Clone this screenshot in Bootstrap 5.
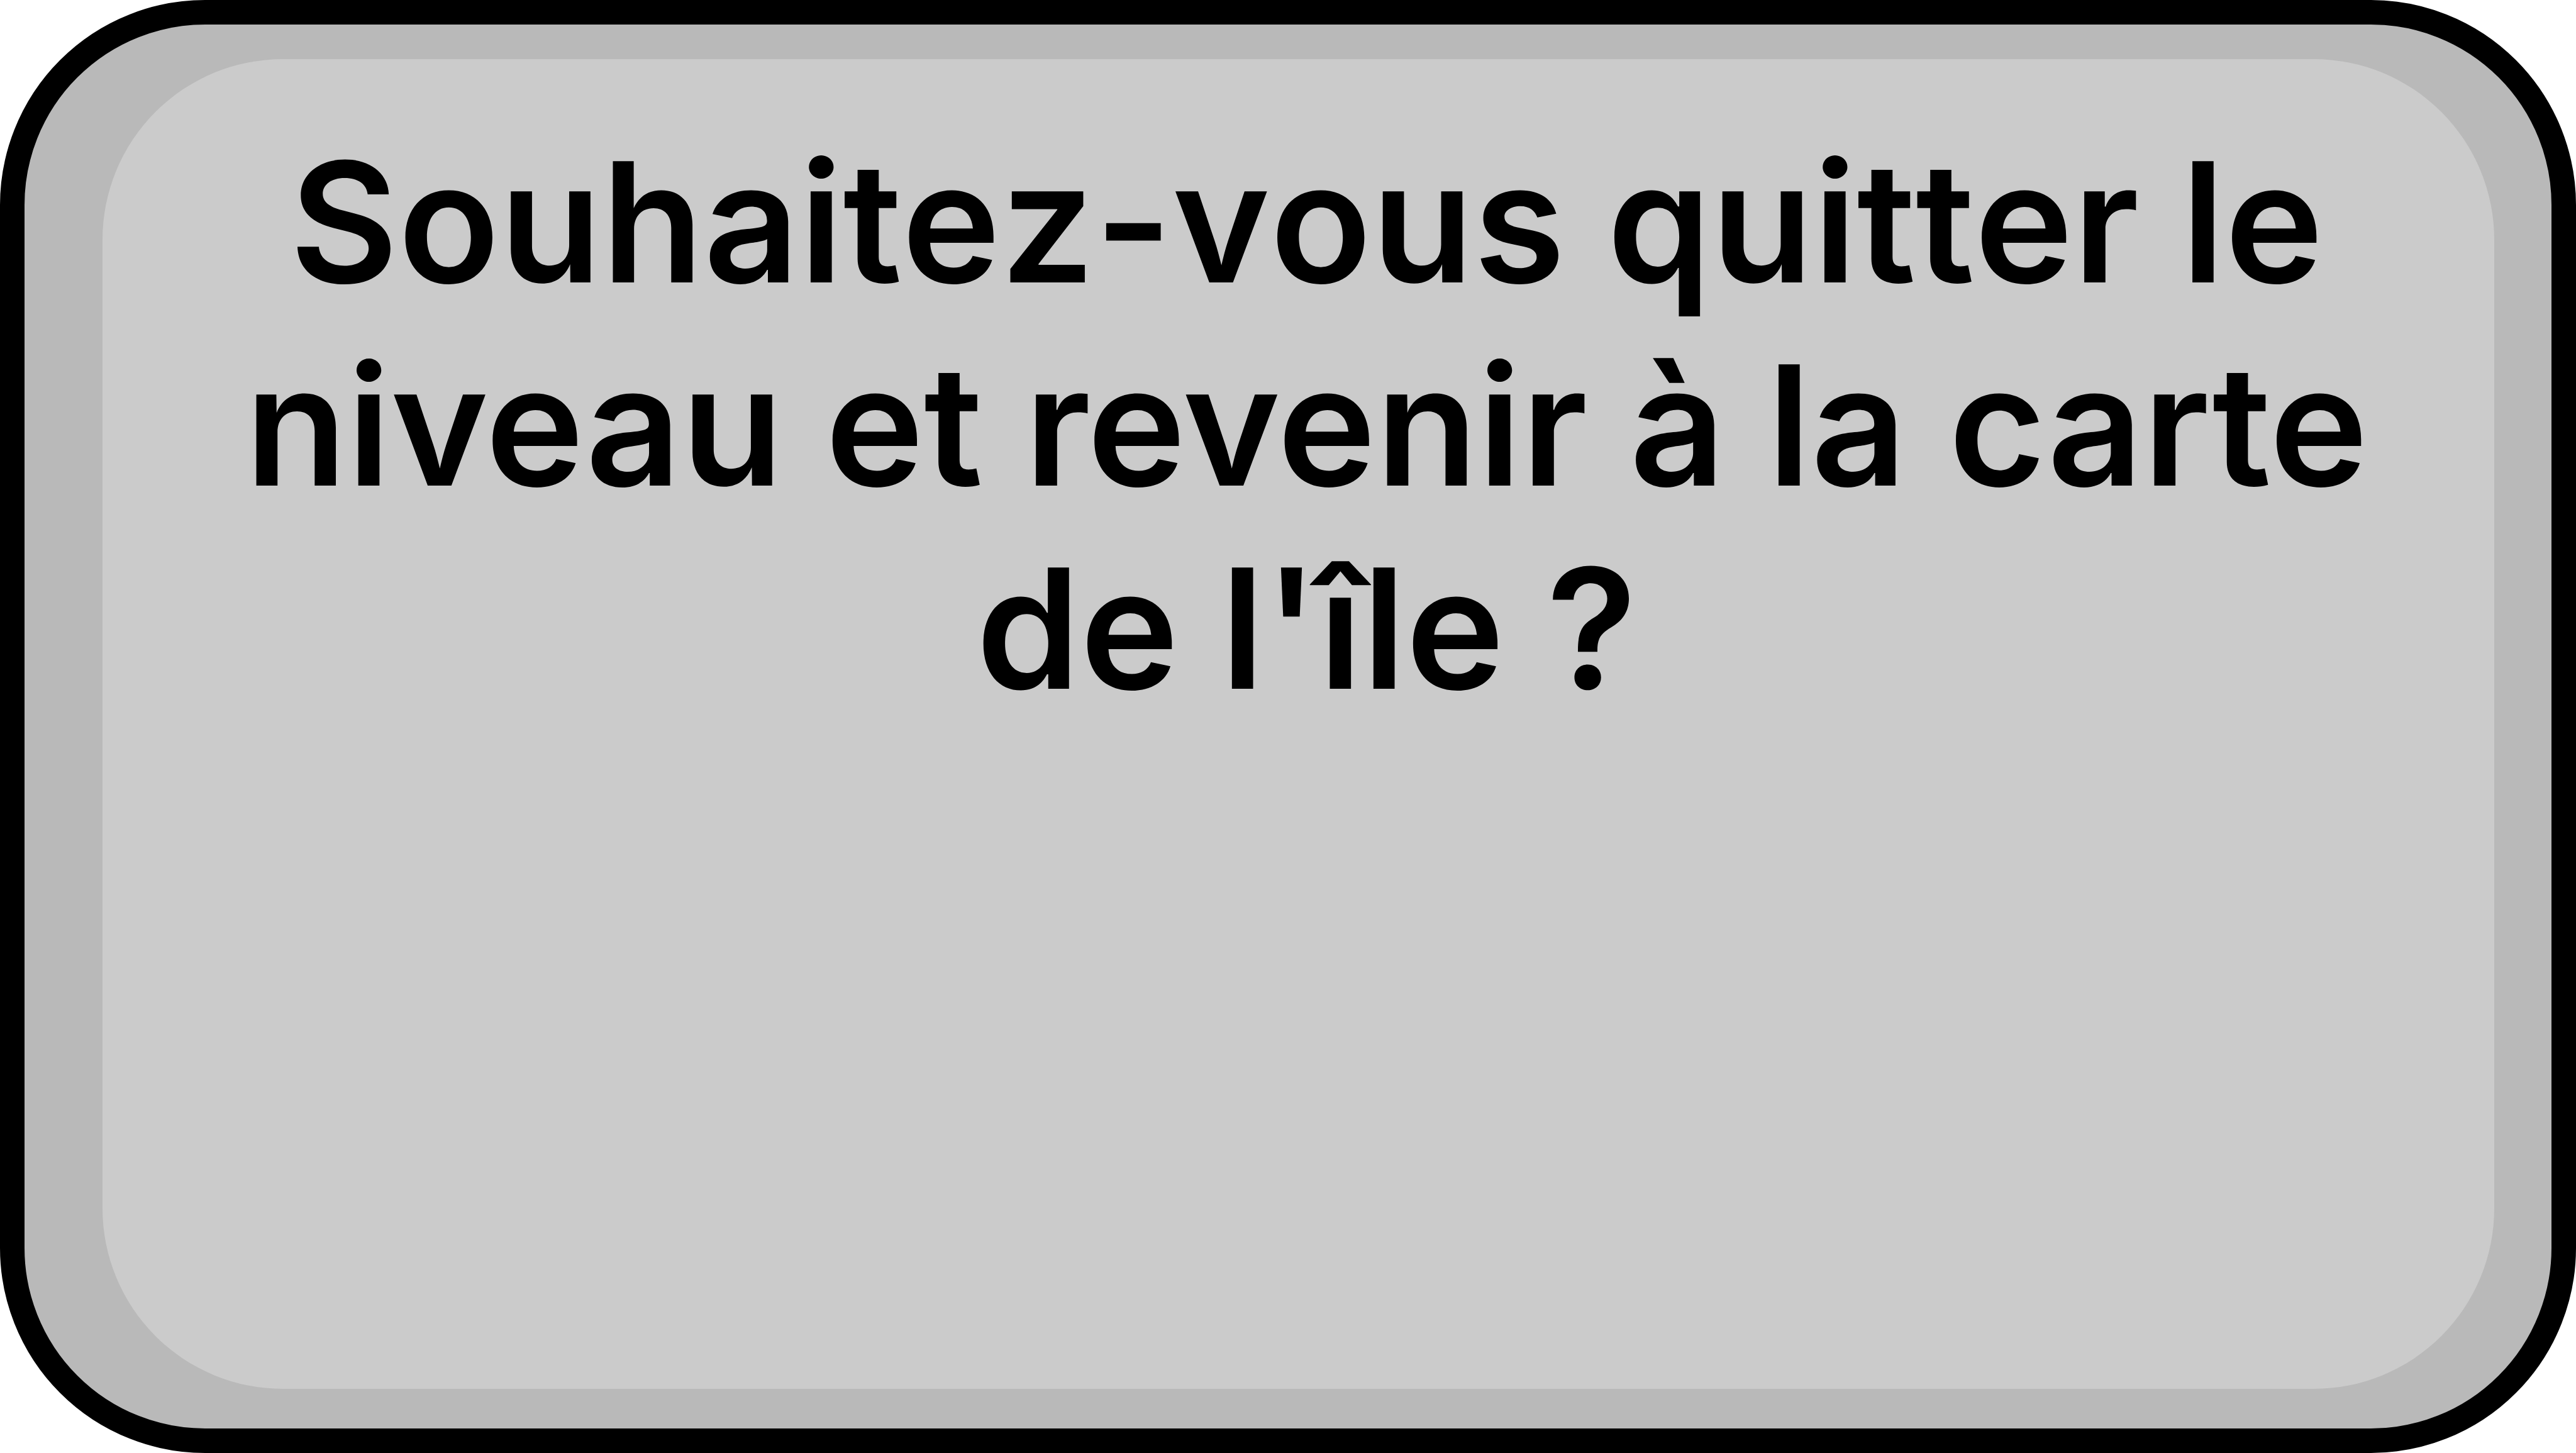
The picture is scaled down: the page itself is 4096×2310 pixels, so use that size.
<!DOCTYPE html>
<html lang="fr">
<head>
<meta charset="utf-8">
<meta name="viewport" content="width=device-width, initial-scale=1">
<title>Quitter le niveau</title>
<link href="https://cdn.jsdelivr.net/npm/bootstrap@5.3.0/dist/css/bootstrap.min.css" rel="stylesheet">
<style>
  .dialog-frame {
    background: #b9b9b9;
    border: 39px solid #000;
    border-radius: 326px;
    padding: 55px 91px 63px 124px;
  }
  .dialog-panel {
    background: #cbcbcb;
    border-radius: 287px;
    padding: 97px 150px 97px 176px;
  }
  .dialog-question {
    font-family: Inter, "Liberation Sans", sans-serif;
    font-size: 265px;
    line-height: 323px;
    color: #000;
  }
  .dialog-question::first-line {
    font-kerning: none;
  }
</style>
</head>
<body class="bg-white">
<main class="dialog-frame d-flex min-vh-100" role="dialog" aria-labelledby="question">
  <section class="dialog-panel flex-grow-1">
    <h1 id="question" class="dialog-question fw-semibold text-center mb-0">Souhaitez-vous quitter le niveau et revenir à la carte de l'île ?</h1>
  </section>
</main>
<script src="https://cdn.jsdelivr.net/npm/bootstrap@5.3.0/dist/js/bootstrap.bundle.min.js"></script>
</body>
</html>
